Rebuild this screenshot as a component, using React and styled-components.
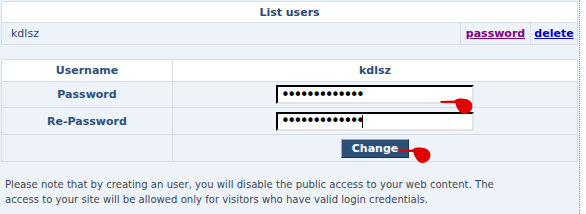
import React from "react";
import styled, { createGlobalStyle } from "styled-components";

const Global = createGlobalStyle`
  body {
    margin: 0;
    background: #fff;
    font-family: "DejaVu Sans", Verdana, sans-serif;
  }
`;

const Page = styled.div`
  position: relative;
  width: 580px;
  height: 214px;
  background: #eef3fa;
  border-right: 1px dotted #8a96a8;
  padding-top: 1px;
  box-sizing: border-box;
`;

const Grid = styled.table`
  border-collapse: collapse;
  width: 577px;
  margin: 0 0 0 1px;
  font-size: 11px;
  margin-bottom: ${(p) => p.$gap || 0}px;

  td {
    border: 1px solid #d4deea;
    padding: 0;
  }
`;

const Row = styled.tr`
  height: ${(p) => p.$h}px;
  background: ${(p) => (p.$white ? "#fff" : "#eef3fa")};
`;

const Head = styled.td`
  text-align: center;
  font-weight: bold;
  color: #2d4a70;
`;

const Name = styled.td`
  padding-left: 9px !important;
  color: #33475f;
`;

const LinkCell = styled.td`
  width: ${(p) => p.$w}px;
  text-align: center;
  white-space: nowrap;
`;

const Link = styled.a`
  font-weight: bold;
  text-decoration: underline;
  color: ${(p) => (p.$visited ? "#800080" : "#0000c8")};
  cursor: pointer;
`;

const Label = styled.td`
  width: 170px;
  text-align: center;
  font-weight: bold;
  color: #2f4f78;
`;

const Field = styled.td`
  padding-left: 103px !important;
`;

const InputWrap = styled.span`
  position: relative;
  display: inline-block;
  vertical-align: middle;
`;

const Input = styled.input`
  box-sizing: border-box;
  width: 198px;
  height: 19px;
  border: 2px inset #9a9a9a;
  border-top-color: #555;
  border-left-color: #555;
  border-right-color: #e4e4e4;
  border-bottom-color: #e4e4e4;
  background: #fff;
  font-family: "DejaVu Sans", sans-serif;
  font-size: 15px;
  letter-spacing: -2.6px;
  padding: 0 2px 0 3px;
  color: #000;
  outline: none;
`;

const Caret = styled.span`
  position: absolute;
  left: 86px;
  top: 3px;
  width: 1px;
  height: 13px;
  background: #000;
`;

const Center = styled.td`
  text-align: center;
`;

const Button = styled.button`
  box-sizing: border-box;
  width: 68px;
  height: 19px;
  background: #2e5077;
  color: #fff;
  font-family: "DejaVu Sans", sans-serif;
  font-weight: bold;
  font-size: 11px;
  border: 1px solid;
  border-color: #9aaabb #1b3352 #1b3352 #9aaabb;
  padding: 0;
  vertical-align: middle;
`;

const Note = styled.p`
  margin: 0;
  padding: 15px 0 0 5px;
  width: 500px;
  font-size: 10.1px;
  line-height: 15px;
  color: #3c4652;
`;

const Mark = styled.svg`
  position: absolute;
  left: ${(p) => p.$x}px;
  top: ${(p) => p.$y}px;
`;

const Pointer = ({ x, y }) => (
  <Mark $x={x} $y={y} width="36" height="18" viewBox="0 0 36 18">
    <path d="M1 3 L18 2.5 L19 5 L2 5 Z" fill="#e00000" />
    <path
      d="M16 2 C20 0 27 0 31 3 C35 6 34 13 29 15 C26 17 22 16 20 13 C18 10 16 7 16 2 Z"
      fill="#e00000"
    />
  </Mark>
);

export default function App() {
  return (
    <>
      <Global />
      <Page>
        <Grid $gap={14}>
          <tbody>
            <Row $h={21} $white>
              <Head colSpan={3}>List users</Head>
            </Row>
            <Row $h={22}>
              <Name>kdlsz</Name>
              <LinkCell $w={69}>
                <Link $visited>password</Link>
              </LinkCell>
              <LinkCell $w={46}>
                <Link>delete</Link>
              </LinkCell>
            </Row>
          </tbody>
        </Grid>
        <Grid>
          <tbody>
            <Row $h={22} $white>
              <Label>Username</Label>
              <Head>kdlsz</Head>
            </Row>
            <Row $h={26}>
              <Label>Password</Label>
              <Field>
                <InputWrap>
                  <Input type="password" defaultValue="kdlszpassword" readOnly />
                </InputWrap>
              </Field>
            </Row>
            <Row $h={27}>
              <Label>Re-Password</Label>
              <Field>
                <InputWrap>
                  <Input type="password" defaultValue="kdlszpassword" readOnly />
                  <Caret />
                </InputWrap>
              </Field>
            </Row>
            <Row $h={27}>
              <td />
              <Center>
                <Button>Change</Button>
              </Center>
            </Row>
          </tbody>
        </Grid>
        <Note>
          Please note that by creating an user, you will disable the public access to your web
          content. The access to your site will be allowed only for visitors who have valid login
          credentials.
        </Note>
        <Pointer x={439} y={98} />
        <Pointer x={397} y={147} />
      </Page>
    </>
  );
}
